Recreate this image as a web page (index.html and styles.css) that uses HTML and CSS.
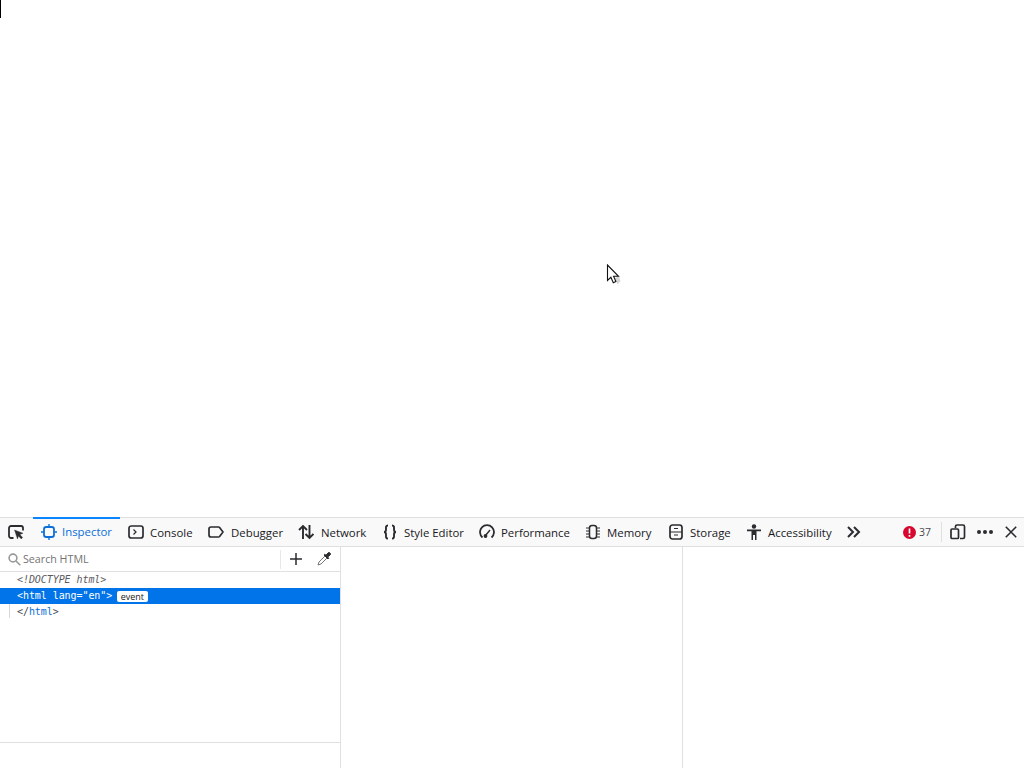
FILE: index.html
```html
<!DOCTYPE html>
<html lang="en">
<head>
<meta charset="utf-8">
<title>Inspector</title>
<link rel="stylesheet" href="styles.css">
</head>
<body>
<main class="page">
  <div class="caret"></div>
  <svg class="cursor" width="16" height="22" viewBox="0 0 16 22"><path d="M9 14l4-2 1.500 5-3 3.500z" fill="#aaa" opacity=".5"/><path d="M1.500 1V16.500l3.400-3.200 2.400 5.400 2.600-1.200-2.300-5.200h4.900z" fill="#fff" stroke="#111" stroke-width="1.100"/></svg>
</main>
<section class="devtools">
  <nav class="toolbar">
    <button class="picker">
      <svg width="16" height="16" viewBox="0 0 16 16" fill="none" stroke="#2b2b30" stroke-width="1.800"><path d="M5.500 14H3a2 2 0 0 1-2-2V4a2 2 0 0 1 2-2h10a2 2 0 0 1 2 2v2.500"/><path d="M6.500 6l8.500 3.200-3.100 1.400 2.700 2.900-1.400 1.400-2.700-2.900L9.500 15z" fill="#2b2b30" stroke-width=".4"/></svg>
    </button>
    <div class="tab active tab-inspector">
      <svg class="ico" width="16" height="16" viewBox="0 0 16 16" fill="none" stroke="#0a6fd8" stroke-width="1.800"><rect x="3" y="3" width="10" height="10" rx="2.300"/><path d="M8 0v2.500M8 13.500V16M0 8h2.500M13.500 8H16" stroke-width="1.400"/></svg>
      <span>Inspector</span>
    </div>
    <div class="tab tab-console">
      <svg class="ico" width="16" height="16" viewBox="0 0 16 16" fill="none" stroke="#2b2b30" stroke-width="1.700"><rect x="1" y="2" width="14" height="12" rx="2.300"/><path d="M5.500 5.500L8 8l-2.500 2.500" stroke-width="1.200"/></svg>
      <span>Console</span>
    </div>
    <div class="tab tab-debugger">
      <svg class="ico" width="16" height="16" viewBox="0 0 16 16" fill="none" stroke="#2b2b30" stroke-width="1.700"><path d="M3 3h7.500a1.500 1.500 0 0 1 1.100.5L15 8l-3.400 4.500a1.500 1.500 0 0 1-1.100.5H3a2 2 0 0 1-2-2V5a2 2 0 0 1 2-2z"/></svg>
      <span>Debugger</span>
    </div>
    <div class="tab tab-network">
      <svg class="ico" width="16" height="16" viewBox="0 0 16 16" fill="none" stroke="#2b2b30" stroke-width="1.900"><path d="M5 15V2M1 6l4-4 4 4M11.500 1v13M7.500 10l4 4 4-4"/></svg>
      <span>Network</span>
    </div>
    <div class="tab tab-style">
      <svg class="ico" width="16" height="16" viewBox="0 0 16 16" fill="none" stroke="#2b2b30" stroke-width="1.900"><path d="M6 1.500C3.500 1.500 4 3.500 4 5.500S3 8 2 8c1 0 2 .5 2 2.500s-.5 4 2 4M10 1.500c2.500 0 2 2 2 4s1 2.500 2 2.500c-1 0-2 .5-2 2.500s.5 4-2 4"/></svg>
      <span>Style Editor</span>
    </div>
    <div class="tab tab-performance">
      <svg class="ico" width="16" height="16" viewBox="0 0 16 16" fill="none" stroke="#2b2b30" stroke-width="1.800"><path d="M3.500 13.500A7 7 0 1 1 12.500 13.500"/><path d="M6.500 11.500L11 6" stroke-width="1.400"/><circle cx="6.500" cy="12" r="1.900" fill="#2b2b30" stroke="none"/></svg>
      <span>Performance</span>
    </div>
    <div class="tab tab-memory">
      <svg class="ico" width="16" height="16" viewBox="0 0 16 16" fill="none" stroke="#2b2b30" stroke-width="1.500"><rect x="4.500" y="1.500" width="7" height="13" rx="2.500"/><path d="M1 4h3M1 7h3M1 10h3M1 13h3M12 4h3M12 7h3M12 10h3M12 13h3" stroke-width="1"/></svg>
      <span>Memory</span>
    </div>
    <div class="tab tab-storage">
      <svg class="ico" width="16" height="16" viewBox="0 0 16 16" fill="none" stroke="#2b2b30" stroke-width="1.700"><rect x="2" y="1" width="12" height="14" rx="2.500"/><path d="M2 8h12M6 4.500h4M6 11h4" stroke-width="1.200"/></svg>
      <span>Storage</span>
    </div>
    <div class="tab tab-accessibility">
      <svg class="ico" width="16" height="16" viewBox="0 0 16 16" fill="#2b2b30"><circle cx="8" cy="2.500" r="2.200"/><path d="M1 5.500h14v1.800h-4.500V16H9V11H7v5H5.500V7.300H1z"/></svg>
      <span>Accessibility</span>
    </div>
    <svg class="more" width="14" height="12" viewBox="0 0 14 12" fill="none" stroke="#2b2b30" stroke-width="2"><path d="M1 1l5 5-5 5M7 1l5 5-5 5"/></svg>
    <div class="errors">
      <svg width="13" height="13" viewBox="0 0 13 13"><circle cx="6.500" cy="6.500" r="6.500" fill="#d7072f"/><path d="M6.500 2.500v5M6.500 9v1.700" stroke="#fff" stroke-width="1.700"/></svg>
      <span>37</span>
    </div>
    <i class="tool-sep"></i>
    <svg class="responsive" width="16" height="16" viewBox="0 0 16 16" fill="none" stroke="#2b2b30" stroke-width="1.700"><path d="M5.500 4V2.500a1.500 1.500 0 0 1 1.500-1.500h6a1.500 1.500 0 0 1 1.500 1.500v10.500a1.500 1.500 0 0 1-1.500 1.500h-3"/><rect x="1" y="5" width="7.500" height="9.500" rx="1"/></svg>
    <svg class="dots" width="16" height="4" viewBox="0 0 16 4" fill="#2b2b30"><circle cx="2" cy="2" r="2"/><circle cx="8" cy="2" r="2"/><circle cx="14" cy="2" r="2"/></svg>
    <svg class="close" width="12" height="12" viewBox="0 0 12 12" fill="none" stroke="#2b2b30" stroke-width="1.600"><path d="M.8.800l10.400 10.400M11.200.800L.8 11.200"/></svg>
  </nav>
  <div class="panels">
    <div class="markup-pane">
      <div class="search-row">
        <svg class="search-ico" width="13" height="13" viewBox="0 0 13 13" fill="none" stroke="#999" stroke-width="1.600"><circle cx="5" cy="5" r="3.900"/><path d="M8 8l4.300 4.300"/></svg>
        <span class="search-text">Search HTML</span>
        <i class="search-sep"></i>
        <svg class="plus" width="12" height="12" viewBox="0 0 12 12" stroke="#2b2b30" stroke-width="1.500"><path d="M6 0v12M0 6h12"/></svg>
        <svg class="dropper" width="14" height="14" viewBox="0 0 14 14" fill="none" stroke="#2b2b30"><path d="M1 13l1-3 6-6 2 2-6 6z" stroke="#777"/><path d="M7 3l4 4 .7-.7-1-1.300L13 3a1.400 1.400 0 0 0-2-2L9 3.300 7.700 2.300z" fill="#2b2b30"/></svg>
      </div>
      <div class="tree">
        <div class="node doctype">&lt;!DOCTYPE html&gt;</div>
        <div class="node selected">&lt;html lang="en"&gt;<span class="badge">event</span></div>
        <div class="node close-tag">&lt;/<span class="tag">html</span>&gt;</div>
      </div>
      <div class="breadcrumbs"></div>
    </div>
    <div class="middle-pane"></div>
    <div class="right-pane"></div>
  </div>
</section>
</body>
</html>
```

FILE: styles.css
```css
* { box-sizing: border-box; }
html, body { margin: 0; height: 768px; overflow: hidden; background: #fff; }
body { display: flex; flex-direction: column; font-family: "Open Sans", "Noto Sans", sans-serif; }
.page { height: 517px; position: relative; background: #fff; }
.caret { width: 1px; height: 18px; background: #000; }
.cursor { position: absolute; left: 606px; top: 264px; }
.devtools { height: 251px; display: flex; flex-direction: column; }
.toolbar { height: 30px; flex: none; display: flex; align-items: center; background: #f9f9fa; border-top: 1px solid #e0e0e2; border-bottom: 1px solid #e0e0e2; padding-right: 7px; }
.toolbar > * { flex: none; }
.picker { width: 33px; height: 28px; padding: 0 0 0 8px; border: 0; background: none; display: flex; align-items: center; }
.tab { height: 28px; display: flex; align-items: center; gap: 6px; padding-left: 8px; font-size: 11.4px; color: #18181a; white-space: nowrap; }
.tab.active { color: #0a6fd8; box-shadow: inset 0 2px 0 #0a84ff; margin-top: -1px; height: 29px; gap: 5px; }
.tab-inspector { width: 87px; }
.tab-console { width: 80px; }
.tab-debugger { width: 90px; gap: 7px; }
.tab-network { width: 84px; gap: 7px; }
.tab-style { width: 97px; }
.tab-performance { width: 106px; }
.tab-memory { width: 83px; }
.tab-storage { width: 78px; }
.tab-accessibility { width: 102px; }
.ico { flex: none; }
.more { margin-left: 7px; }
.errors { margin-left: auto; display: flex; align-items: center; gap: 3px; font-size: 10.5px; color: #4a4a4f; }
.tool-sep { width: 1px; height: 20px; background: #e0e0e2; margin-left: 10px; }
.responsive { margin-left: 8px; }
.dots { margin-left: 11px; }
.close { margin-left: 12px; }
.panels { flex: 1; display: flex; min-height: 0; }
.markup-pane { width: 341px; border-right: 1px solid #e0e0e2; display: flex; flex-direction: column; }
.middle-pane { width: 342px; border-right: 1px solid #e0e0e2; }
.right-pane { flex: 1; }
.search-row { height: 25px; flex: none; display: flex; align-items: center; border-bottom: 1px solid #e0e0e2; padding-left: 8px; background: #fff; }
.search-ico { flex: none; }
.search-text { margin: -1px 0 0 2px; width: 257px; font-size: 10.7px; color: #737373; }
.search-sep { width: 1px; height: 19px; background: #e8e8ea; }
.plus { margin-left: 9px; }
.dropper { margin-left: 15px; }
.tree { flex: 1; font-family: "DejaVu Sans Mono", monospace; font-size: 10px; }
.node { height: 16px; line-height: 16px; padding-left: 17px; color: #4a4a4f; white-space: nowrap; letter-spacing: -.07px; }
.doctype { font-style: italic; color: #5c5c5f; }
.selected { background: #0074e8; color: #fff; display: flex; align-items: center; }
.badge { margin-left: 5px; height: 11px; line-height: 11px; padding: 0 3.500px; background: #fff; color: #222; border-radius: 2px; font-family: "Open Sans", sans-serif; font-size: 9px; letter-spacing: 0; }
.close-tag { position: relative; }
.close-tag::before { content: ""; position: absolute; left: 9px; top: 0; width: 1px; height: 14px; background: #d7d7db; }
.tag { color: #0a6fd8; }
.breadcrumbs { height: 26px; flex: none; border-top: 1px solid #e0e0e2; }
```
